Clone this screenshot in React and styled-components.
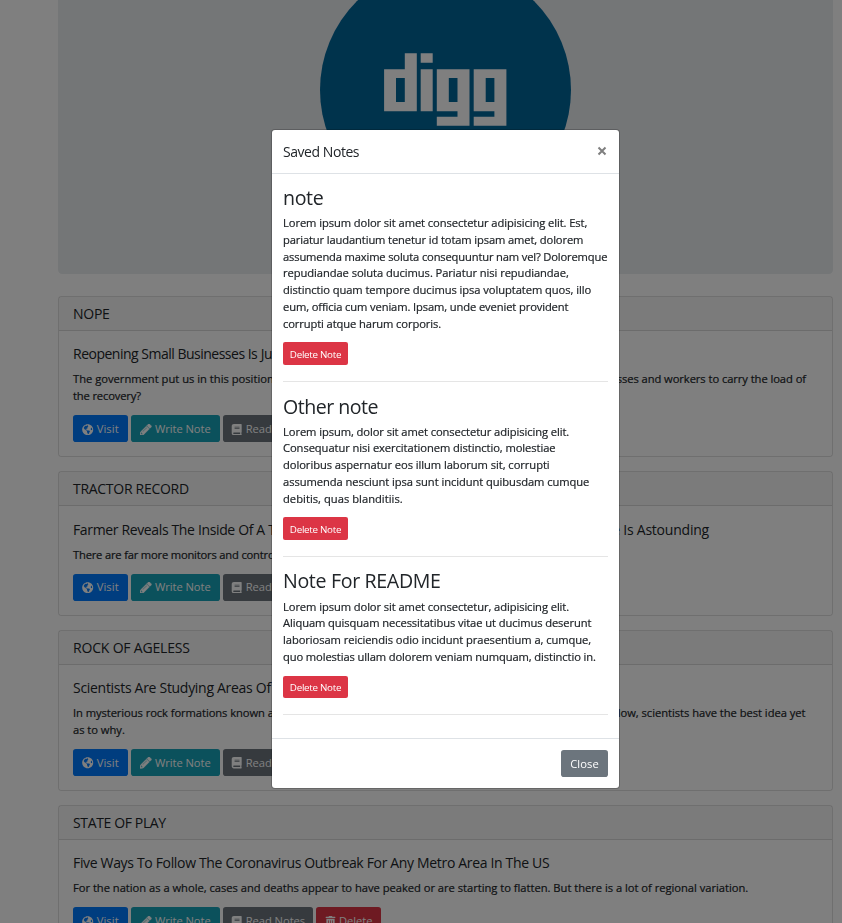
import React from 'react';
import styled, { createGlobalStyle } from 'styled-components';
import { FaGlobeAmericas, FaPencilAlt, FaBook, FaTrashAlt } from 'react-icons/fa';

const GlobalStyle = createGlobalStyle`
  * { box-sizing: border-box; }
  html, body { margin: 0; height: 923px; overflow: hidden; background: #fff; }
  body { font-family: "Open Sans", "Noto Sans", sans-serif; font-size: 11.2px; line-height: 16.8px; color: #212529; }
  h3, h4, h5, p { margin: 0; font-weight: 400; }
`;

const Page = styled.div`
  height: 923px;
  overflow: hidden;
`;

const Content = styled.main`
  display: flex;
  flex-direction: column;
  width: 775px;
  margin-left: 58px;
`;

const Jumbotron = styled.header`
  display: flex;
  justify-content: center;
  height: 273.6px;
  margin-bottom: 22.4px;
  overflow: hidden;
  background: #e9ecef;
  border-radius: 0 0 4.2px 4.2px;
`;

const Logo = styled.svg`
  display: block;
  flex: none;
  width: 252px;
  height: 252px;
  margin-top: -36px;
`;

const Card = styled.article`
  margin-bottom: 14px;
  border: 1px solid rgba(0, 0, 0, 0.125);
  border-radius: 3px;
`;

const CardHeader = styled.h5`
  height: 34px;
  padding: 9px 14px 0;
  background: rgba(0, 0, 0, 0.03);
  border-bottom: 1px solid rgba(0, 0, 0, 0.125);
  font-size: 14px;
  line-height: 16.8px;
`;

const CardBody = styled.div`
  padding: 15.4px 14px 14px;
`;

const CardTitle = styled.h5`
  height: 16.8px;
  margin-bottom: 8.2px;
  font-size: 14px;
  line-height: 16.8px;
`;

const CardText = styled.div`
  margin-bottom: 10.4px;
`;

const Line = styled.p`
  height: 16.8px;
  white-space: nowrap;
  -webkit-text-stroke: 0.2px currentColor;
`;

const Run = styled.span`
  white-space: pre;
  letter-spacing: ${(p) => p.$track || 0}px;
`;

const SplitLine = styled.span`
  display: flex;
  justify-content: space-between;
  width: ${(p) => p.$width}px;
`;

const Actions = styled.div`
  display: flex;
  gap: 3.1px;
`;

const tones = { blue: '#007bff', teal: '#17a2b8', gray: '#6c757d', red: '#dc3545' };

const Button = styled.button`
  display: flex;
  align-items: center;
  justify-content: center;
  gap: 3px;
  flex: none;
  width: ${(p) => p.$width}px;
  height: ${(p) => (p.$small ? 22.7 : 26.8)}px;
  padding: ${(p) => (p.$small ? 3 : 1.4)}px 0 0;
  border: 0;
  border-radius: ${(p) => (p.$small ? 2.1 : 2.8)}px;
  background: ${(p) => tones[p.$tone]};
  color: #fff;
  font-family: inherit;
  font-size: ${(p) => (p.$small ? 9.8 : 11.2)}px;
  line-height: 16.8px;
  white-space: nowrap;
  svg { flex: none; }
`;

const Overlay = styled.div`
  position: fixed;
  inset: 0;
  padding: 130px 0 0 272px;
  background: rgba(0, 0, 0, 0.5);
`;

const Modal = styled.section`
  display: flex;
  flex-direction: column;
  width: 347px;
  height: 658px;
  border-radius: 3px;
  background: #fff;
  box-shadow: 0 0 0 1px rgba(0, 0, 0, 0.2);
`;

const ModalHeader = styled.header`
  display: flex;
  justify-content: space-between;
  height: 44px;
  padding: 12px 11px 0;
  border-bottom: 1px solid #dee2e6;
`;

const ModalTitle = styled.h5`
  font-size: 14px;
  line-height: 20px;
`;

const CloseIcon = styled.svg`
  width: 10px;
  height: 10px;
  margin: 4px 1px 0 0;
  stroke: #7f7f7f;
  stroke-width: 2;
`;

const ModalBody = styled.div`
  flex: 1;
  padding: 12px 11px 0;
`;

const Note = styled.section`
  padding-bottom: 16.2px;
  margin-bottom: 12.2px;
  border-bottom: 1px solid #e5e5e5;
`;

const NoteTitle = styled.h3`
  height: 23.5px;
  margin-bottom: 5.6px;
  font-size: 19.6px;
  line-height: 23.5px;
`;

const NoteText = styled.div`
  margin-bottom: 9.8px;
`;

const ModalFooter = styled.footer`
  display: flex;
  justify-content: flex-end;
  height: 50px;
  padding: 11px 11px 0;
  border-top: 1px solid #dee2e6;
`;

const articles = [
  {
    tag: ['NOPE', -0.26],
    title: [['Reopening Small Businesses Is', -0.5], [' Just', -0.3]],
    lines: [
      { split: 733, lead: ['The government put us in this position', -0.007], tail: ['businesses and workers to carry the load of', -0.069] },
      { text: ['the recovery?', -0.158] },
    ],
  },
  {
    tag: ['TRACTOR RECORD', -0.288],
    split: 636,
    title: [['Farmer Reveals The Inside Of A', -0.358], [' Tractor', -0.3]],
    titleTail: ['Value Is Astounding', -0.217],
    lines: [{ text: ['There are far more monitors and controls', -0.19] }],
  },
  {
    tag: ['ROCK OF AGELESS', -0.184],
    title: [['Scientists Are Studying Areas Of', -0.295]],
    lines: [
      { split: 732.5, lead: ['In mysterious rock formations known as', -0.074], tail: ['below, scientists have the best idea yet', -0.038] },
      { text: ['as to why.', -0.036] },
    ],
  },
  {
    tag: ['STATE OF PLAY', -0.364],
    title: [['Five Ways To Follow The Coronavirus Outbreak For Any Metro Area In The US', -0.335]],
    lines: [
      {
        text: [
          'For the nation as a whole, cases and deaths appear to have peaked or are starting to flatten. But there is a lot of regional variation.',
          -0.026,
        ],
      },
    ],
  },
];

const notes = [
  {
    title: ['note', -0.374],
    lines: [
      ['Lorem ipsum dolor sit amet consectetur adipisicing elit. Est,', -0.088],
      ['pariatur laudantium tenetur id totam ipsam amet, dolorem', -0.133],
      ['assumenda maxime soluta consequuntur nam vel? Doloremque', -0.166],
      ['repudiandae soluta ducimus. Pariatur nisi repudiandae,', -0.076],
      ['distinctio quam tempore ducimus ipsa voluptatem quos, illo', -0.076],
      ['eum, officia cum veniam. Ipsam, unde eveniet provident', -0.125],
      ['corrupti atque harum corporis.', -0.115],
    ],
  },
  {
    title: ['Other note', -0.52],
    lines: [
      ['Lorem ipsum, dolor sit amet consectetur adipisicing elit.', -0.088],
      ['Consequatur nisi exercitationem distinctio, molestiae', -0.08],
      ['doloribus aspernatur eos illum laborum sit, corrupti', -0.065],
      ['assumenda nesciunt ipsa sunt incidunt quibusdam cumque', -0.075],
      ['debitis, quas blanditiis.', 0.02],
    ],
  },
  {
    title: ['Note For README', -0.34],
    lines: [
      ['Lorem ipsum dolor sit amet consectetur, adipisicing elit.', -0.09],
      ['Aliquam quisquam necessitatibus vitae ut ducimus deserunt', -0.1],
      ['laboriosam reiciendis odio incidunt praesentium a, cumque,', -0.078],
      ['quo molestias ullam dolorem veniam numquam, distinctio in.', -0.118],
    ],
  },
];

const Tracked = ({ of: [text, track] }) => <Run $track={track}>{text}</Run>;

function DiggLogo() {
  return (
    <Logo viewBox="0.5 0 252 252" aria-label="digg">
      <circle cx="126" cy="126" r="125.5" fill="#006699" />
      <g fill="#fff" fillRule="evenodd">
        <path d="M85.3 89.3h12v58H64.6v-42h20.7zM76.5 114v24h8.8v-24z" />
        <path d="M101.2 89.3h12v9.5h-12zM101.2 105.3h12v42h-12z" />
        <path d="M117.3 105.3H150v56.5h-32.7v-9h20.7v-5.5h-20.7zM129.3 114v24h8.7v-24z" />
        <path d="M154.2 105.3h32.7v56.5h-32.7v-9h20.7v-5.5h-20.7zM166.2 114v24h8.7v-24z" />
      </g>
    </Logo>
  );
}

function Article({ tag, title, titleTail, split, lines }) {
  const heading = <span>{title.map((t) => <Tracked key={t[0]} of={t} />)}</span>;
  return (
    <Card>
      <CardHeader><Tracked of={tag} /></CardHeader>
      <CardBody>
        <CardTitle>
          {titleTail ? <SplitLine $width={split}>{heading}<Tracked of={titleTail} /></SplitLine> : heading}
        </CardTitle>
        <CardText>
          {lines.map((l, i) => (
            <Line key={i}>
              {l.split ? <SplitLine $width={l.split}><Tracked of={l.lead} /><Tracked of={l.tail} /></SplitLine> : <Tracked of={l.text} />}
            </Line>
          ))}
        </CardText>
        <Actions>
          <Button $tone="blue" $width={55}><FaGlobeAmericas size={11.4} /><Run $track={0.1}>Visit</Run></Button>
          <Button $tone="teal" $width={89}><FaPencilAlt size={11.4} stroke="#fff" strokeWidth={24} /><Run $track={-0.05}>Write Note</Run></Button>
          <Button $tone="gray" $width={90}><FaBook size={11.4} /><Run $track={-0.05}>Read Notes</Run></Button>
          <Button $tone="red" $width={65}><FaTrashAlt size={11} /><Run $track={-0.05}>Delete</Run></Button>
        </Actions>
      </CardBody>
    </Card>
  );
}

export default function App() {
  return (
    <Page>
      <GlobalStyle />
      <Content>
        <Jumbotron><DiggLogo /></Jumbotron>
        {articles.map((a) => <Article key={a.tag[0]} {...a} />)}
      </Content>
      <Overlay>
        <Modal>
          <ModalHeader>
            <ModalTitle><Run $track={-0.45}>Saved Notes</Run></ModalTitle>
            <CloseIcon viewBox="0 0 10 10"><path d="M1.5 1.5l7 7M8.5 1.5l-7 7" /></CloseIcon>
          </ModalHeader>
          <ModalBody>
            {notes.map((n) => (
              <Note key={n.title[0]}>
                <NoteTitle><Tracked of={n.title} /></NoteTitle>
                <NoteText>{n.lines.map((l) => <Line key={l[0]}><Tracked of={l} /></Line>)}</NoteText>
                <Button $small $tone="red" $width={65}><Run $track={-0.281}>Delete Note</Run></Button>
              </Note>
            ))}
          </ModalBody>
          <ModalFooter>
            <Button $tone="gray" $width={47}><Run $track={0.1}>Close</Run></Button>
          </ModalFooter>
        </Modal>
      </Overlay>
    </Page>
  );
}
